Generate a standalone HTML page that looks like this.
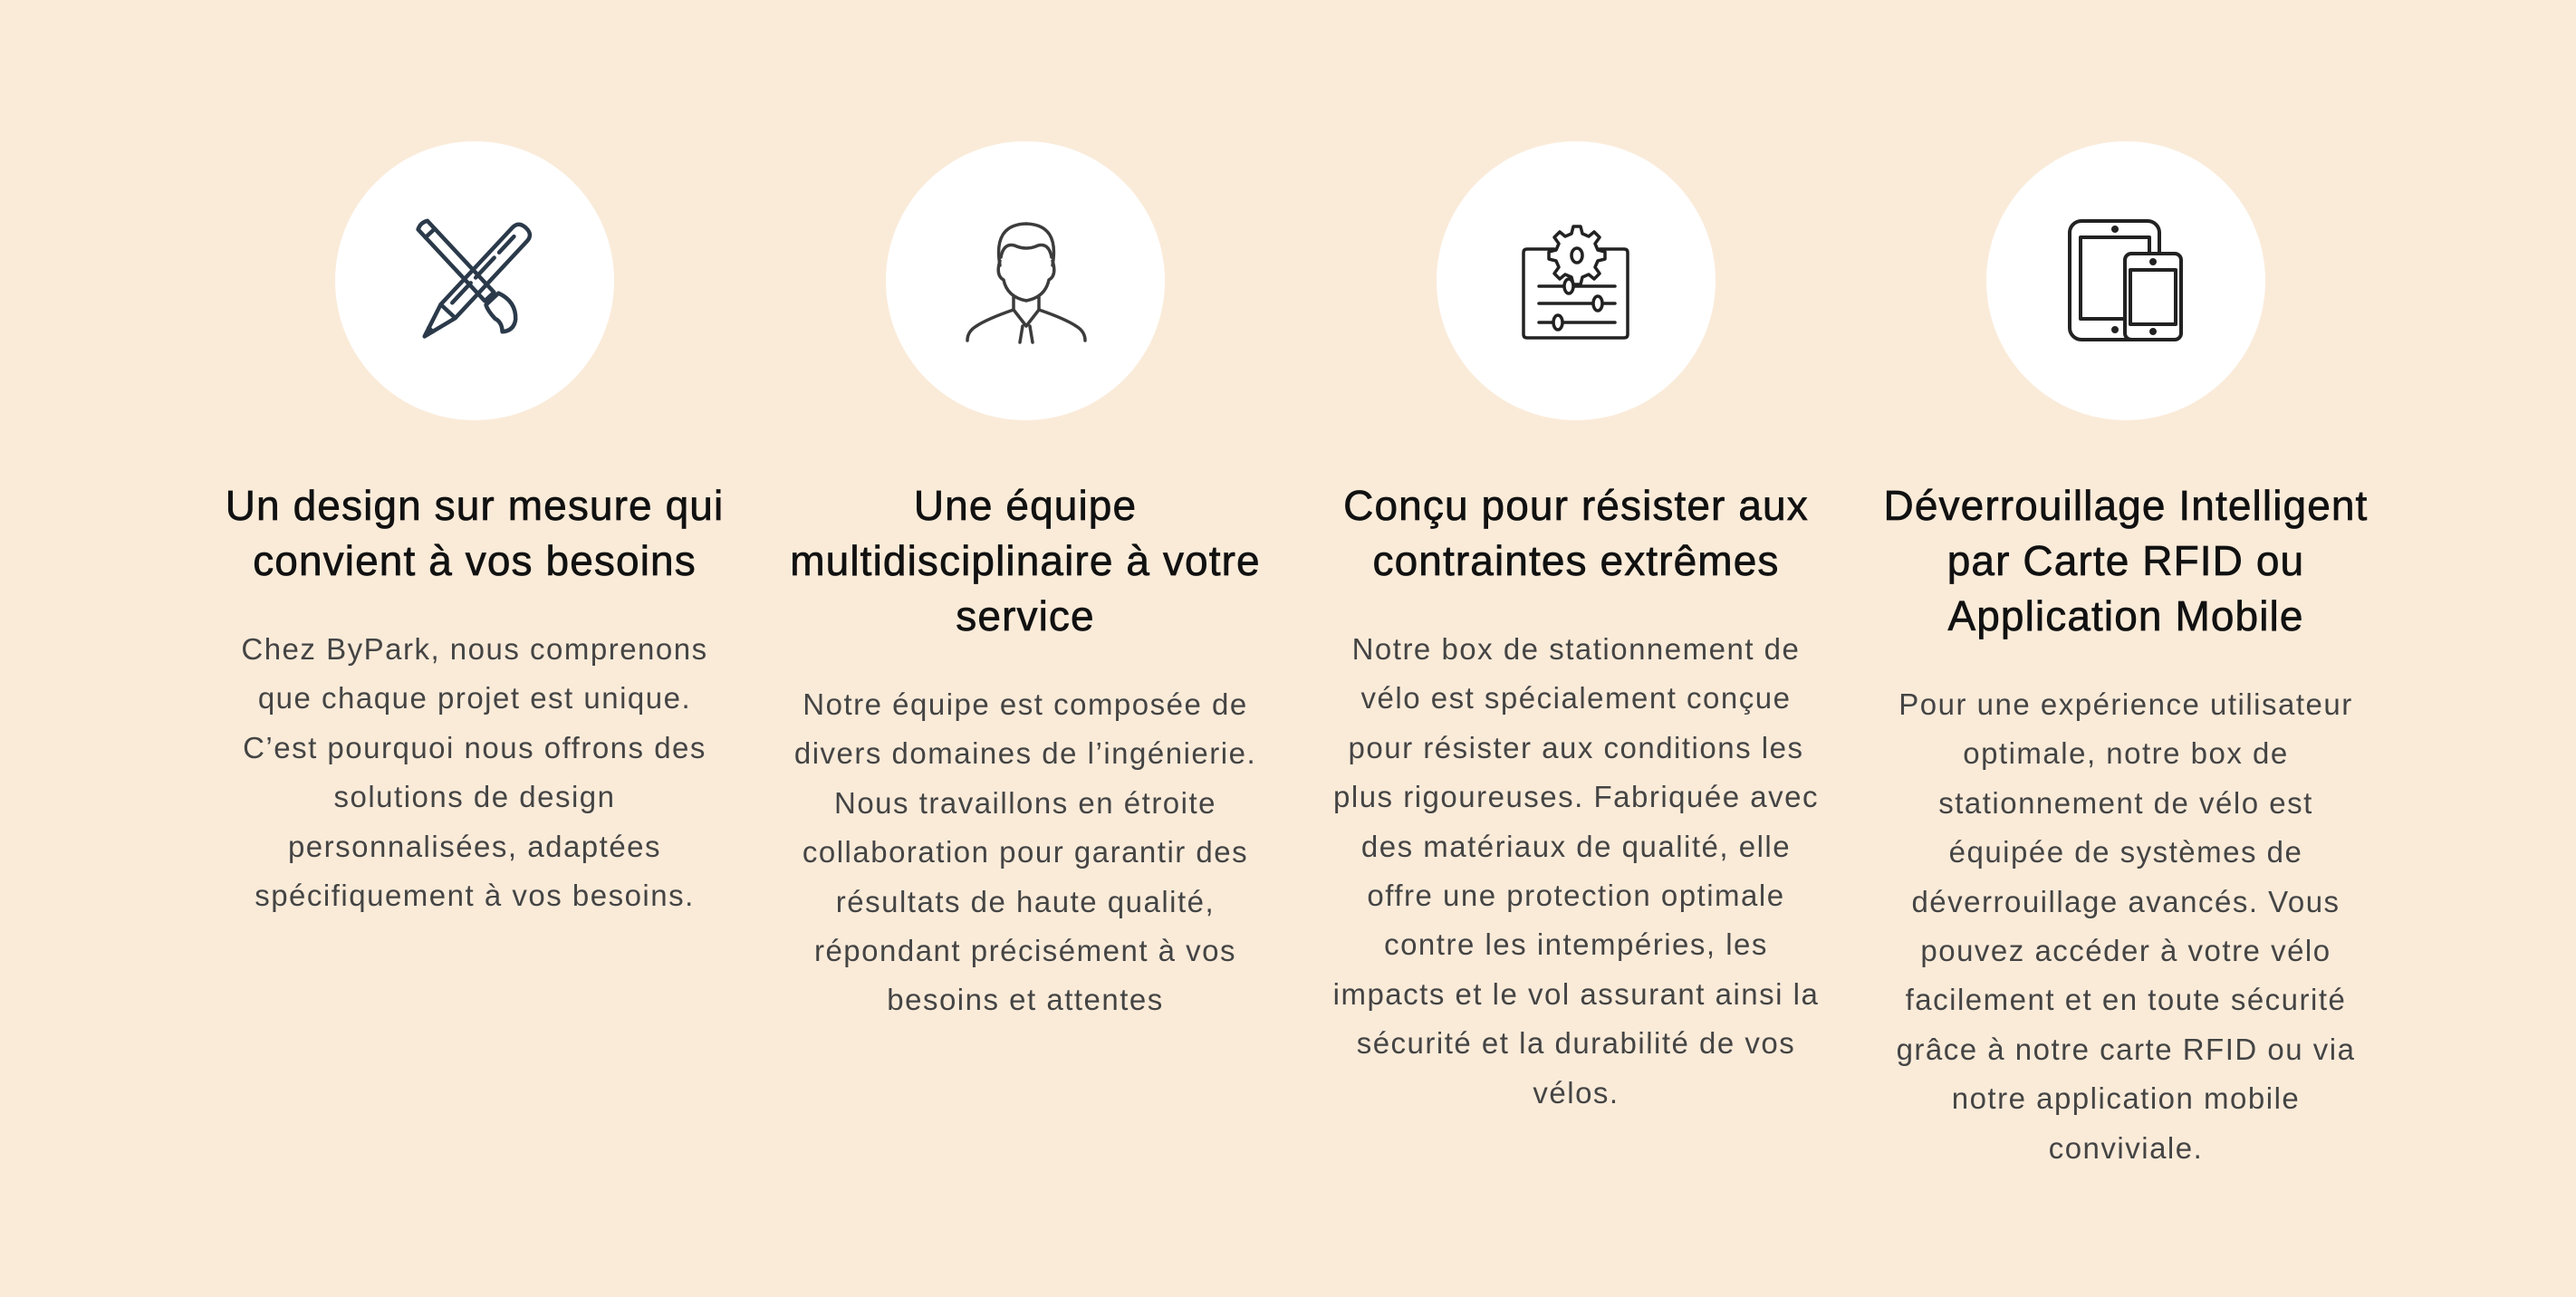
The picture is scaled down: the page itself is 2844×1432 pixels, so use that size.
<!DOCTYPE html>
<html><head><meta charset="utf-8">
<style>
html,body{margin:0;padding:0}
body{width:2844px;height:1432px;background:#faebd9;position:relative;overflow:hidden;font-family:"Liberation Sans",sans-serif}
.circ{position:absolute;top:156px;width:308px;height:308px;border-radius:50%;background:#fff}
.circ svg{position:absolute;left:0;top:0}
.col{position:absolute;top:528px;width:640px;text-align:center;white-space:nowrap}
h2{margin:0;font-size:46px;line-height:61px;font-weight:normal;color:#111;letter-spacing:1.1px;-webkit-text-stroke:0.7px #111}
p{margin:40px 0 0;font-size:33px;line-height:54.4px;color:#444;letter-spacing:1.5px}
</style></head><body>

<div class="circ" style="left:370px">
<svg width="308" height="308" viewBox="0 0 308 308" fill="none" stroke="#2b3a4a" stroke-width="4.5" stroke-linecap="round" stroke-linejoin="round">
<g transform="translate(156,154) rotate(-47)">
<path d="M-46 -11 L70 -11 Q80 -11 80 0 Q80 11 70 11 L-46 11 Z"/>
<path d="M-46 -11 L-84 0 L-46 11"/>
<path d="M-74 -3 L-74 3"/>
<path d="M-36 -3 L64 -3" stroke-dasharray="30 8"/>
</g>
<g transform="translate(154,154) rotate(47)">
<path d="M-84 -7 Q-88 0 -84 7 L24 7 L24 -7 Z"/>
<path d="M-72 -7 L-72 7"/>
<path d="M28 -10 Q48 -18 62 -4 Q70 6 62 16 Q54 9 46 12 Q34 12 28 9 Z"/>
</g>
</svg></div>

<div class="circ" style="left:978px">
<svg width="308" height="308" viewBox="0 0 308 308" fill="none" stroke="#3c3c3c" stroke-width="3.5" stroke-linecap="round" stroke-linejoin="round">
<path d="M126 137 Q118 92 155 91 Q192 92 184 137"/>
<path d="M127 128 Q130 112 142 115 Q155 121 168 115 Q180 112 183 128"/>
<path d="M126 132 Q121 148 130 153 Q134 172 155 176 Q176 172 180 153 Q189 148 184 132"/>
<path d="M141 172 L141 186 Q112 196 100 204 Q90 210 90 220"/>
<path d="M169 172 L169 186 Q198 196 210 204 Q220 210 220 220"/>
<path d="M141 186 L155 204 L169 186"/>
<path d="M151 204 L148 222 M159 204 L162 222"/>
</svg></div>

<div class="circ" style="left:1586px">
<svg width="308" height="308" viewBox="0 0 308 308" fill="none" stroke="#222" stroke-width="3.5" stroke-linecap="round" stroke-linejoin="round">
<path d="M130 119 L100 119 Q96 119 96 123 L96 213 Q96 217 100 217 L207 217 Q211 217 211 213 L211 123 Q211 119 207 119 L180 119"/>
<g transform="translate(155,126)">
<path d="M-4 -32 L4 -32 L6 -24 L13 -21 L19 -26 L25 -20 L20 -13 L23 -6 L31 -4 L31 4 L23 6 L20 13 L25 20 L19 26 L13 21 L6 24 L4 32 L-4 32 L-6 24 L-13 21 L-19 26 L-25 20 L-20 13 L-23 6 L-31 4 L-31 -4 L-23 -6 L-20 -13 L-25 -20 L-19 -26 L-13 -21 L-6 -24 Z" fill="#fff"/>
<ellipse cx="0" cy="0" rx="6" ry="8"/>
</g>
<path d="M113 160 L197 160 M113 179 L197 179 M113 200 L197 200"/>
<ellipse cx="146" cy="160" rx="5" ry="8" fill="#fff"/>
<ellipse cx="178" cy="179" rx="5" ry="8" fill="#fff"/>
<ellipse cx="134" cy="200" rx="5" ry="8" fill="#fff"/>
</svg></div>

<div class="circ" style="left:2193px">
<svg width="308" height="308" viewBox="0 0 308 308" fill="none" stroke="#222" stroke-width="4" stroke-linecap="round" stroke-linejoin="round">
<rect x="92" y="88" width="99" height="131" rx="13"/>
<rect x="104" y="106" width="76" height="90"/>
<circle cx="142" cy="97" r="2" fill="#222"/>
<circle cx="142" cy="208" r="2" fill="#222"/>
<rect x="153" y="124" width="62" height="95" rx="7" fill="#fff"/>
<rect x="159" y="142" width="50" height="60"/>
<circle cx="184" cy="133" r="2" fill="#222"/>
<circle cx="184" cy="210" r="2" fill="#222"/>
</svg></div>

<div class="col" style="left:204px">
<h2>Un design sur mesure qui<br>convient à vos besoins</h2>
<p>Chez ByPark, nous comprenons<br>que chaque projet est unique.<br>C’est pourquoi nous offrons des<br>solutions de design<br>personnalisées, adaptées<br>spécifiquement à vos besoins.</p>
</div>

<div class="col" style="left:812px">
<h2>Une équipe<br>multidisciplinaire à votre<br>service</h2>
<p>Notre équipe est composée de<br>divers domaines de l’ingénierie.<br>Nous travaillons en étroite<br>collaboration pour garantir des<br>résultats de haute qualité,<br>répondant précisément à vos<br>besoins et attentes</p>
</div>

<div class="col" style="left:1420px">
<h2>Conçu pour résister aux<br>contraintes extrêmes</h2>
<p>Notre box de stationnement de<br>vélo est spécialement conçue<br>pour résister aux conditions les<br>plus rigoureuses. Fabriquée avec<br>des matériaux de qualité, elle<br>offre une protection optimale<br>contre les intempéries, les<br>impacts et le vol assurant ainsi la<br>sécurité et la durabilité de vos<br>vélos.</p>
</div>

<div class="col" style="left:2027px">
<h2>Déverrouillage Intelligent<br>par Carte RFID ou<br>Application Mobile</h2>
<p>Pour une expérience utilisateur<br>optimale, notre box de<br>stationnement de vélo est<br>équipée de systèmes de<br>déverrouillage avancés. Vous<br>pouvez accéder à votre vélo<br>facilement et en toute sécurité<br>grâce à notre carte RFID ou via<br>notre application mobile<br>conviviale.</p>
</div>

</body></html>
